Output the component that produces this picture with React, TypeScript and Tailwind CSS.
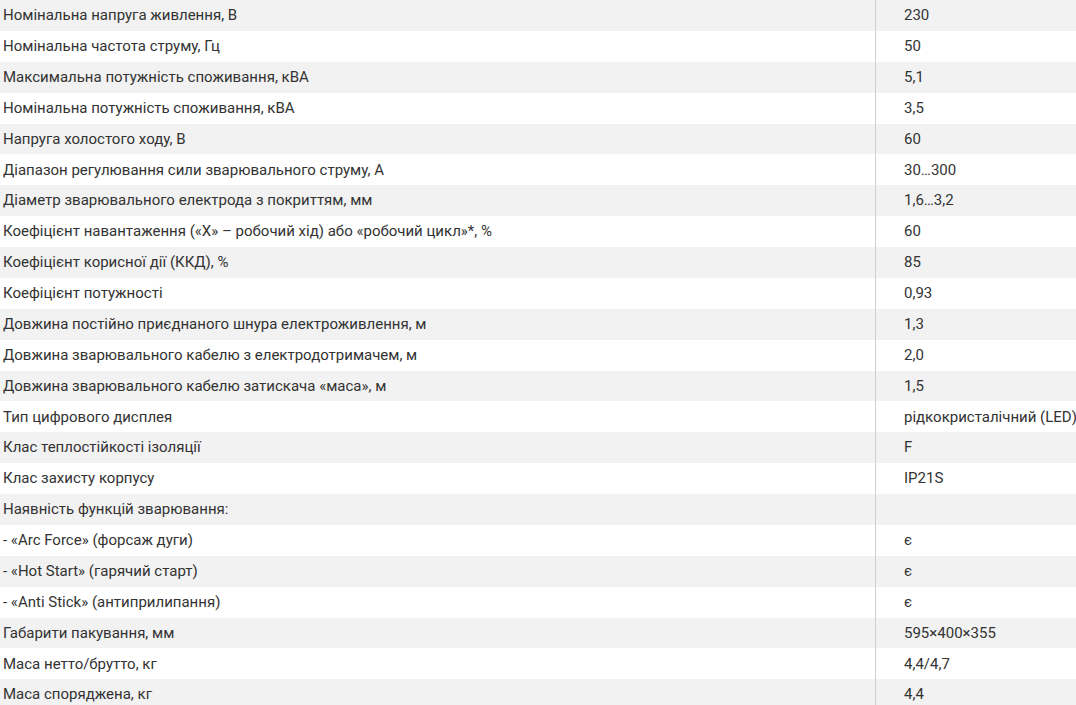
import React from "react";

const rows: [string, string][] = [
  ["Номінальна напруга живлення, В", "230"],
  ["Номінальна частота струму, Гц", "50"],
  ["Максимальна потужність споживання, кВА", "5,1"],
  ["Номінальна потужність споживання, кВА", "3,5"],
  ["Напруга холостого ходу, В", "60"],
  ["Діапазон регулювання сили зварювального струму, А", "30…300"],
  ["Діаметр зварювального електрода з покриттям, мм", "1,6…3,2"],
  ["Коефіцієнт навантаження («Х» – робочий хід) або «робочий цикл»*, %", "60"],
  ["Коефіцієнт корисної дії (ККД), %", "85"],
  ["Коефіцієнт потужності", "0,93"],
  ["Довжина постійно приєднаного шнура електроживлення, м", "1,3"],
  ["Довжина зварювального кабелю з електродотримачем, м", "2,0"],
  ["Довжина зварювального кабелю затискача «маса», м", "1,5"],
  ["Тип цифрового дисплея", "рідкокристалічний (LED)"],
  ["Клас теплостійкості ізоляції", "F"],
  ["Клас захисту корпусу", "IP21S"],
  ["Наявність функцій зварювання:", ""],
  ["- «Arc Force» (форсаж дуги)", "є"],
  ["- «Hot Start» (гарячий старт)", "є"],
  ["- «Anti Stick» (антиприлипання)", "є"],
  ["Габарити пакування, мм", "595×400×355"],
  ["Маса нетто/брутто, кг", "4,4/4,7"],
  ["Маса споряджена, кг", "4,4"],
];

export default function App() {
  return (
    <div
      className="w-[1076px] h-[705px] overflow-hidden bg-white text-[#333] text-[15px]"
      style={{ fontFamily: "Roboto, 'Noto Sans', sans-serif" }}
    >
      {rows.map(([k, v], i) => (
        <div
          key={i}
          className={`flex h-[30.89px] items-center ${i % 2 === 0 ? "bg-[#f2f2f2]" : "bg-white"}`}
        >
          <div className="w-[876px] shrink-0 h-full flex items-center pl-[3px] border-r border-[#cfcfcf] whitespace-nowrap">
            {k}
          </div>
          <div className="flex-1 h-full flex items-center pl-[28px] whitespace-nowrap overflow-hidden">
            {v}
          </div>
        </div>
      ))}
    </div>
  );
}
